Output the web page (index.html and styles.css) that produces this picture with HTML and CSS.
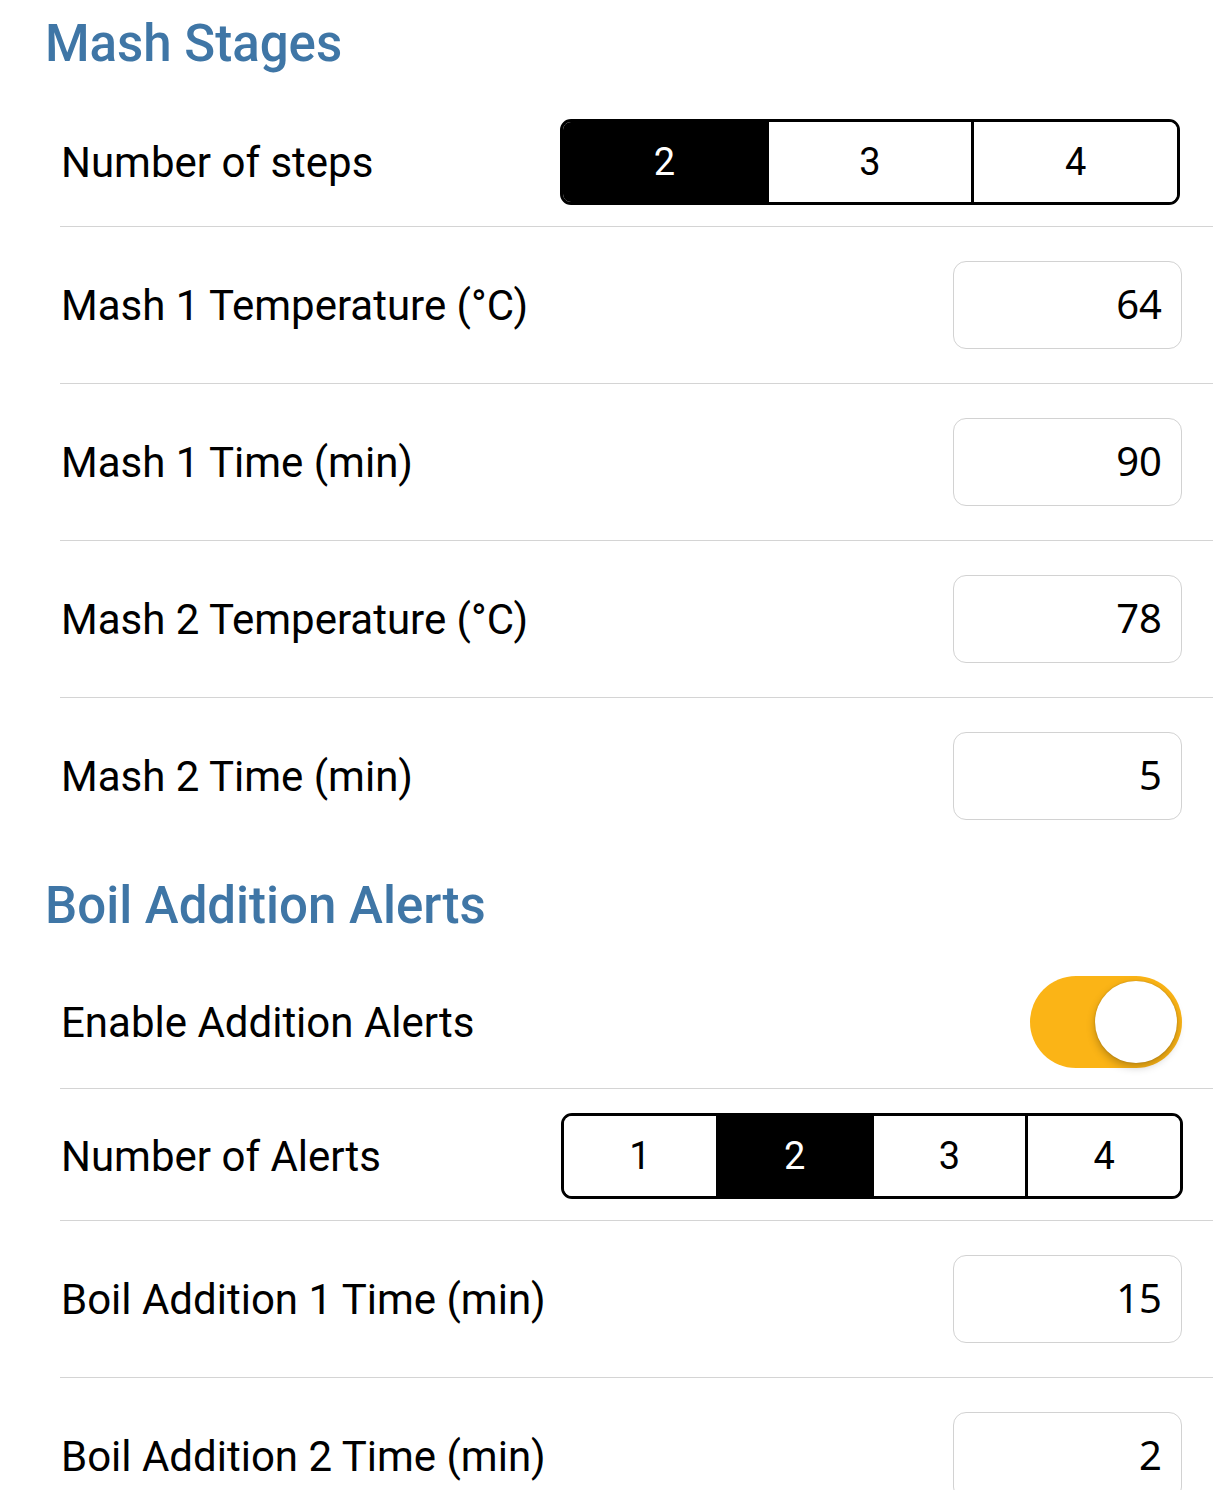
FILE: index.html
```html
<!DOCTYPE html>
<html>
<head>
<meta charset="utf-8">
<link rel="stylesheet" href="styles.css">
</head>
<body>
<div class="page">
  <h2 class="section-title first">Mash Stages</h2>
  <div class="row seg-row top-seg">
    <span class="label">Number of steps</span>
    <div class="segmented three">
      <div class="seg active">2</div>
      <div class="seg">3</div>
      <div class="seg">4</div>
    </div>
  </div>
  <div class="row">
    <span class="label">Mash 1 Temperature (°C)</span>
    <div class="num-input">64</div>
  </div>
  <div class="row">
    <span class="label">Mash 1 Time (min)</span>
    <div class="num-input">90</div>
  </div>
  <div class="row">
    <span class="label">Mash 2 Temperature (°C)</span>
    <div class="num-input">78</div>
  </div>
  <div class="row last">
    <span class="label">Mash 2 Time (min)</span>
    <div class="num-input">5</div>
  </div>

  <h2 class="section-title second">Boil Addition Alerts</h2>
  <div class="row toggle-row">
    <span class="label">Enable Addition Alerts</span>
    <div class="toggle on"><div class="knob"></div></div>
  </div>
  <div class="row seg-row">
    <span class="label">Number of Alerts</span>
    <div class="segmented four">
      <div class="seg">1</div>
      <div class="seg active">2</div>
      <div class="seg">3</div>
      <div class="seg">4</div>
    </div>
  </div>
  <div class="row">
    <span class="label">Boil Addition 1 Time (min)</span>
    <div class="num-input">15</div>
  </div>
  <div class="row last">
    <span class="label">Boil Addition 2 Time (min)</span>
    <div class="num-input">2</div>
  </div>
</div>
</body>
</html>
```

FILE: styles.css
```css
* { box-sizing: border-box; }
html, body {
  margin: 0;
  padding: 0;
  background: #ffffff;
}
body {
  font-family: Roboto, "Liberation Sans", sans-serif;
  color: #000;
  overflow: hidden;
}
.page {
  width: 1213px;
  height: 1490px;
  overflow: hidden;
}
.section-title {
  margin: 0;
  padding-left: 45px;
  font-family: Roboto, sans-serif;
  font-weight: 500;
  font-size: 51px;
  line-height: 60px;
  color: #3f76a6;
}
.section-title.first {
  padding-top: 14px;
  height: 99px;
}
.section-title.second {
  padding-top: 22px;
  height: 102px;
}
.row {
  margin-left: 60px;
  padding: 34px 31px 34px 1px;
  display: flex;
  align-items: center;
  justify-content: space-between;
  border-bottom: 1px solid #d4d4d4;
}
.row.last { border-bottom: none; }
.label {
  font-size: 42px;
  font-weight: 400;
}
.num-input {
  width: 229px;
  height: 88px;
  border: 1px solid #d2d2d2;
  border-radius: 13px;
  text-align: right;
  padding-right: 19px;
  font-family: "Noto Sans", sans-serif;
  font-size: 40px;
  line-height: 84px;
}
.seg-row { padding-top: 24px; padding-bottom: 21px; }
.top-seg { padding-top: 20px; padding-bottom: 21px; }
.segmented {
  display: flex;
  height: 86px;
  border: 3px solid #000;
  border-radius: 11px;
  overflow: hidden;
}
.segmented.three { width: 620px; margin-right: 2px; }
.segmented.four { width: 622px; margin-right: -1px; }
.seg {
  flex: 1;
  display: flex;
  align-items: center;
  justify-content: center;
  font-family: Roboto, sans-serif;
  font-size: 38px;
  color: #000;
  background: #fff;
  border-left: 3px solid #000;
}
.seg:first-child { border-left: none; }
.seg.active {
  background: #000;
  color: #fff;
}
.toggle-row { padding-top: 20px; padding-bottom: 20px; }
.toggle {
  position: relative;
  width: 152px;
  height: 92px;
  border-radius: 46px;
  background: #fbb416;
}
.knob {
  position: absolute;
  right: 5px;
  top: 5px;
  width: 82px;
  height: 82px;
  border-radius: 50%;
  background: #fff;
  box-shadow: 0 4px 8px rgba(0,0,0,0.25), 0 0 2px rgba(0,0,0,0.2);
}
```
